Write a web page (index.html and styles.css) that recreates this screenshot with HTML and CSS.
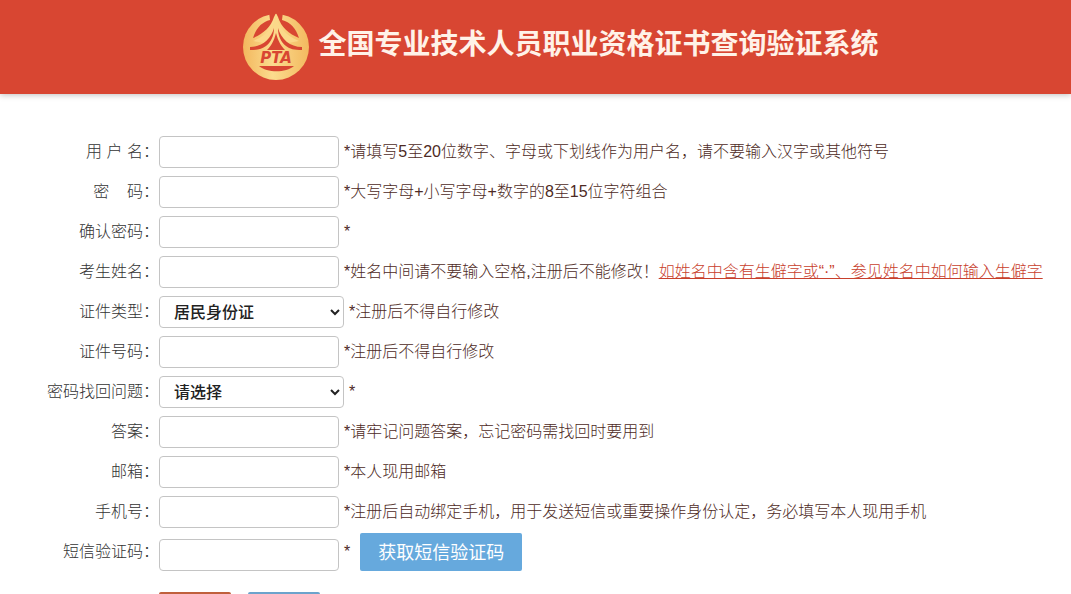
FILE: index.html
```html
<!DOCTYPE html>
<html lang="zh-CN">
<head>
    <meta charset="UTF-8">
    <meta name="viewport" content="width=device-width, initial-scale=1.0">
    <title>全国专业技术人员职业资格证书查询验证系统</title>
    <link rel="stylesheet" href="styles.css">
</head>
<body>

    <header class="header">
        <svg class="logo" viewBox="0 0 68 68" role="img" aria-label="PTA">
            <defs>
                <linearGradient id="gold" x1="0" y1="0" x2="1" y2="0">
                    <stop offset="0" stop-color="#f3b75e"/>
                    <stop offset="0.45" stop-color="#fbdc8e"/>
                    <stop offset="1" stop-color="#f3b95f"/>
                </linearGradient>
            </defs>
            <circle cx="34" cy="34" r="33" fill="url(#gold)"/>
            <!-- gaps between the ring and the tower -->
            <path d="M27 -1 H41 L40 7 C48 9 54 15 57 25 C47 21 39 14 36 4 L34 0 L32 4 C29 14 21 21 11 25 C14 15 20 9 28 7 Z" fill="#d84632"/>
            <path d="M34 0 C33 12 26 22 11 28 L34 32 L57 28 C42 22 35 12 34 0 Z" fill="#fbd88a"/>
            <!-- roof lines and tower -->
            <path d="M32 15 C29 26 20 34 8 34 L8 37 C16 37 20 36 24 33 C29 29 32 23 32 15 Z" fill="#d84632"/>
            <path d="M36 15 C39 26 48 34 60 34 L60 37 C52 37 48 36 44 33 C39 29 36 23 36 15 Z" fill="#d84632"/>
            <path d="M34 20 C36 28 39 33 43 37 H25 C29 33 32 28 34 20 Z" fill="#d84632"/>
            <path d="M17 53 H52 C44 60 25 60 17 53 Z" fill="#d84632"/>
            <text class="logo-text" x="34" y="50" text-anchor="middle">PTA</text>
        </svg>
        <h1 class="title">全国专业技术人员职业资格证书查询验证系统</h1>
    </header>

    <form class="form">
        <div class="row">
            <label class="label" for="username">用&nbsp;户&nbsp;名：</label>
            <input class="field" type="text" id="username">
            <span class="hint">*请填写5至20位数字、字母或下划线作为用户名，请不要输入汉字或其他符号</span>
        </div>
        <div class="row">
            <label class="label" for="password">密&nbsp;&nbsp;&nbsp;&nbsp;码：</label>
            <input class="field" type="password" id="password">
            <span class="hint">*大写字母+小写字母+数字的8至15位字符组合</span>
        </div>
        <div class="row">
            <label class="label" for="confirm">确认密码：</label>
            <input class="field" type="password" id="confirm">
            <span class="hint">*</span>
        </div>
        <div class="row">
            <label class="label" for="realname">考生姓名：</label>
            <input class="field" type="text" id="realname">
            <span class="hint">*姓名中间请不要输入空格,注册后不能修改！<a class="link" href="#">如姓名中含有生僻字或“·”、参见姓名中如何输入生僻字</a></span>
        </div>
        <div class="row">
            <label class="label" for="idtype">证件类型：</label>
            <select class="field select" id="idtype">
                <option>居民身份证</option>
            </select>
            <span class="hint">*注册后不得自行修改</span>
        </div>
        <div class="row">
            <label class="label" for="idnumber">证件号码：</label>
            <input class="field" type="text" id="idnumber">
            <span class="hint">*注册后不得自行修改</span>
        </div>
        <div class="row">
            <label class="label" for="question">密码找回问题：</label>
            <select class="field select" id="question">
                <option>请选择</option>
            </select>
            <span class="hint">*</span>
        </div>
        <div class="row">
            <label class="label" for="answer">答案：</label>
            <input class="field" type="text" id="answer">
            <span class="hint">*请牢记问题答案，忘记密码需找回时要用到</span>
        </div>
        <div class="row">
            <label class="label" for="email">邮箱：</label>
            <input class="field" type="email" id="email">
            <span class="hint">*本人现用邮箱</span>
        </div>
        <div class="row">
            <label class="label" for="phone">手机号：</label>
            <input class="field" type="tel" id="phone">
            <span class="hint">*注册后自动绑定手机，用于发送短信或重要操作身份认定，务必填写本人现用手机</span>
        </div>
        <div class="row row-sms">
            <label class="label" for="smscode">短信验证码：</label>
            <input class="field" type="text" id="smscode">
            <span class="hint">*</span>
            <button class="sms-btn" type="button">获取短信验证码</button>
        </div>
        <div class="actions">
            <button class="btn btn-submit" type="submit" aria-label="提交"></button>
            <button class="btn btn-back" type="button" aria-label="返回"></button>
        </div>
    </form>

</body>
</html>
```

FILE: styles.css
```css
* {
    box-sizing: border-box;
}
body {
    margin: 0;
    height: 100vh;
    overflow: hidden;
    background-color: #fff;
    color: #333;
    font-family: "Liberation Sans", "Noto Sans CJK SC", sans-serif;
    font-size: 16px;
    font-weight: 300;
}
.header {
    display: flex;
    justify-content: center;
    align-items: center;
    gap: 8px;
    height: 94px;
    padding-left: 50px;
    background-color: #d84632;
    box-shadow: 0 1px 6px rgba(0, 0, 0, 0.25);
}
.logo {
    flex: none;
    width: 68px;
    height: 68px;
    overflow: visible;
}
.logo-text {
    fill: #d84632;
    font-family: "DejaVu Sans", sans-serif;
    font-size: 15px;
    font-style: italic;
    font-weight: bold;
}
.title {
    margin: 0;
    padding-bottom: 10px;
    color: #fff2e8;
    font-family: "Noto Sans CJK SC", sans-serif;
    font-size: 28px;
    font-weight: 700;
    line-height: 40px;
    white-space: nowrap;
}
.form {
    display: flex;
    flex-direction: column;
    gap: 8px;
    padding-top: 42px;
}
.row {
    display: flex;
    align-items: center;
    min-height: 32px;
    white-space: nowrap;
}
.label {
    flex: none;
    width: 159px;
    line-height: 32px;
    text-align: right;
}
.field {
    flex: none;
    width: 180px;
    height: 32px;
    padding: 0 10px;
    border: 1px solid #c4c4c4;
    border-radius: 4px;
    background-color: #fff;
    color: #222;
    font-family: "Liberation Sans", "Noto Sans CJK SC", sans-serif;
    font-size: 16px;
}
.select {
    width: 185px;
    padding: 0 2px 0 10px;
    font-weight: 500;
}
.hint {
    margin-left: 5px;
    color: #4d2a24;
    line-height: 32px;
}
.link {
    color: #c8402c;
}
.row-sms {
    height: 38px;
    margin-top: -3px;
}
.row-sms .field {
    align-self: flex-end;
}
.sms-btn {
    height: 38px;
    margin-left: 10px;
    padding: 0 18px 2px;
    border: none;
    border-radius: 2px;
    background-color: #66a9dd;
    color: #fff;
    font-family: "Noto Sans CJK SC", sans-serif;
    font-size: 18px;
    font-weight: 400;
    cursor: pointer;
}
.actions {
    display: flex;
    gap: 17px;
    margin-top: 13px;
    padding-left: 159px;
}
.btn {
    width: 72px;
    height: 36px;
    border: none;
    border-radius: 2px;
    cursor: pointer;
}
.btn-submit {
    background-color: #c0603c;
}
.btn-back {
    background-color: #6ca3cc;
}
```
